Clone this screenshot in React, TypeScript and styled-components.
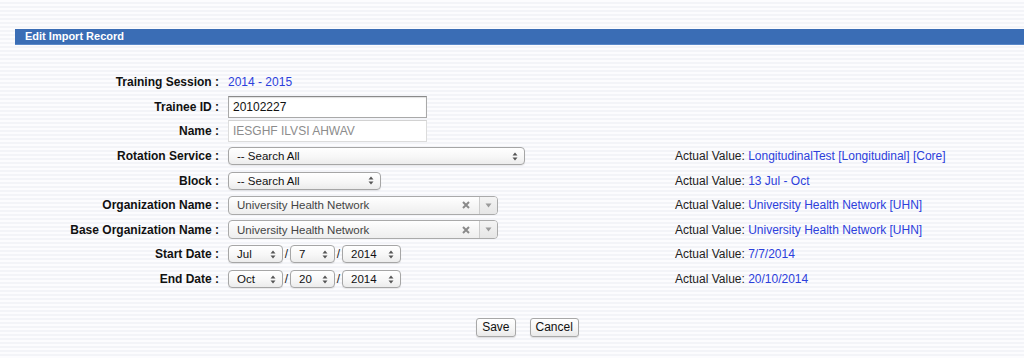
import React from 'react';
import styled, { createGlobalStyle } from 'styled-components';

const GlobalStyle = createGlobalStyle`
  html, body {
    margin: 0;
    padding: 0;
  }
  body {
    font-family: "Liberation Sans", Arial, sans-serif;
    font-size: 12px;
    color: #111;
    background: repeating-linear-gradient(
      to bottom,
      #fcfcfe 0px,
      #fcfcfe 2px,
      #f3f4f8 2px,
      #f3f4f8 4px
    );
    min-height: 358px;
  }
`;

const Page = styled.div`
  padding-top: 29px;
  height: 358px;
  box-sizing: border-box;
`;

const TitleBar = styled.div`
  margin-left: 15px;
  height: 15px;
  background: #3a6db5;
  border-bottom: 1px solid #5a88c8;
  color: #fff;
  font-weight: bold;
  font-size: 11px;
  line-height: 15px;
  padding-left: 10px;
`;

const Form = styled.div`
  margin-top: 25px;
  display: grid;
  grid-template-columns: 220px 455px 1fr;
  grid-auto-rows: 24.6px;
  align-items: center;
`;

const Label = styled.div`
  font-weight: bold;
  text-align: right;
  padding-right: 1px;
  white-space: nowrap;
`;

const Field = styled.div`
  padding-left: 8px;
  display: flex;
  align-items: center;
`;

const Blue = styled.span`
  color: #2c40dc;
`;

const Actual = styled.div`
  white-space: nowrap;
  color: #222;
`;

const TextBox = styled.div<{ $disabled?: boolean }>`
  width: 199px;
  height: 22px;
  box-sizing: border-box;
  background: #fff;
  border: 1px solid ${(p) => (p.$disabled ? '#dcdcdc' : '#a9a9a9')};
  border-top-color: ${(p) => (p.$disabled ? '#d2d2d2' : '#8a8a8a')};
  box-shadow: ${(p) => (p.$disabled ? 'none' : 'inset 0 1px 1px rgba(0,0,0,0.12)')};
  color: ${(p) => (p.$disabled ? '#8c8c8c' : '#111')};
  padding-left: 4px;
  line-height: 20px;
  font-size: 12px;
`;

const SelectBox = styled.div<{ $w: number }>`
  width: ${(p) => p.$w}px;
  height: 18px;
  box-sizing: border-box;
  border: 1px solid #a6a6a6;
  border-radius: 4px;
  background: linear-gradient(to bottom, #ffffff 0%, #f7f7f7 55%, #ececec 100%);
  box-shadow: 0 1px 1px rgba(0,0,0,0.08);
  display: flex;
  align-items: center;
  justify-content: space-between;
  padding: 0 6px 0 8px;
  font-size: 11.5px;
  color: #111;
`;

const Chosen = styled.div`
  width: 270px;
  height: 19px;
  box-sizing: border-box;
  border: 1px solid #aaa;
  border-radius: 4px;
  background: linear-gradient(to bottom, #ffffff 0%, #f6f6f6 50%, #eeeeee 100%);
  display: flex;
  align-items: center;
  font-size: 11.5px;
  color: #444;
`;

const ChosenText = styled.span`
  flex: 1;
  padding-left: 8px;
`;

const ChosenClear = styled.span`
  width: 16px;
  display: flex;
  justify-content: center;
  margin-right: 5px;
`;

const ChosenArrow = styled.span`
  width: 17px;
  height: 100%;
  border-left: 1px solid #ccc;
  background: linear-gradient(to bottom, #f4f4f4, #e6e6e6);
  border-radius: 0 3px 3px 0;
  display: flex;
  align-items: center;
  justify-content: center;
`;

const DateRow = styled.div`
  display: flex;
  align-items: center;
`;

const Slash = styled.span`
  width: 7px;
  text-align: center;
  color: #222;
`;

const ButtonRow = styled.div`
  margin-top: 27px;
  display: flex;
  justify-content: center;
  gap: 14px;
  padding-left: 31px;
`;

const Button = styled.button`
  font-family: "Liberation Sans", Arial, sans-serif;
  font-size: 12px;
  height: 19px;
  padding: 0 5px;
  border: 1px solid #a8a8a8;
  border-radius: 3px;
  background: linear-gradient(to bottom, #ffffff 0%, #f5f5f5 60%, #e9e9e9 100%);
  box-shadow: 0 1px 1px rgba(0,0,0,0.12);
  color: #111;
  line-height: 17px;
`;

const UpDown = () => (
  <svg width="6" height="9" viewBox="0 0 6 9">
    <path d="M3 0.5 L5.5 3.5 L0.5 3.5 Z" fill="#555" />
    <path d="M3 8.5 L5.5 5.5 L0.5 5.5 Z" fill="#555" />
  </svg>
);

const ClearX = () => (
  <svg width="8" height="8" viewBox="0 0 8 8">
    <path d="M1 1 L7 7 M7 1 L1 7" stroke="#8a8a8a" strokeWidth="2" />
  </svg>
);

const DownArrow = () => (
  <svg width="7" height="5" viewBox="0 0 7 5">
    <path d="M0.5 0.5 L6.5 0.5 L3.5 4.5 Z" fill="#9a9a9a" />
  </svg>
);

const Select = ({ value, width }: { value: string; width: number }) => (
  <SelectBox $w={width}>
    <span>{value}</span>
    <UpDown />
  </SelectBox>
);

const ChosenSelect = ({ value }: { value: string }) => (
  <Chosen>
    <ChosenText>{value}</ChosenText>
    <ChosenClear>
      <ClearX />
    </ChosenClear>
    <ChosenArrow>
      <DownArrow />
    </ChosenArrow>
  </Chosen>
);

const DatePicker = ({ m, d, y }: { m: string; d: string; y: string }) => (
  <DateRow>
    <Select value={m} width={55} />
    <Slash>/</Slash>
    <Select value={d} width={45} />
    <Slash>/</Slash>
    <Select value={y} width={59} />
  </DateRow>
);

const ActualValue = ({ value }: { value?: string }) =>
  value ? (
    <Actual>
      Actual Value: <Blue>{value}</Blue>
    </Actual>
  ) : (
    <div />
  );

function App() {
  return (
    <Page>
      <GlobalStyle />
      <TitleBar>Edit Import Record</TitleBar>
      <Form>
        <Label>Training Session :</Label>
        <Field>
          <Blue>2014 - 2015</Blue>
        </Field>
        <ActualValue />

        <Label>Trainee ID :</Label>
        <Field>
          <TextBox>20102227</TextBox>
        </Field>
        <ActualValue />

        <Label>Name :</Label>
        <Field>
          <TextBox $disabled>IESGHF ILVSI AHWAV</TextBox>
        </Field>
        <ActualValue />

        <Label>Rotation Service :</Label>
        <Field>
          <Select value="-- Search All" width={297} />
        </Field>
        <ActualValue value="LongitudinalTest [Longitudinal] [Core]" />

        <Label>Block :</Label>
        <Field>
          <Select value="-- Search All" width={153} />
        </Field>
        <ActualValue value="13 Jul - Oct" />

        <Label>Organization Name :</Label>
        <Field>
          <ChosenSelect value="University Health Network" />
        </Field>
        <ActualValue value="University Health Network [UHN]" />

        <Label>Base Organization Name :</Label>
        <Field>
          <ChosenSelect value="University Health Network" />
        </Field>
        <ActualValue value="University Health Network [UHN]" />

        <Label>Start Date :</Label>
        <Field>
          <DatePicker m="Jul" d="7" y="2014" />
        </Field>
        <ActualValue value="7/7/2014" />

        <Label>End Date :</Label>
        <Field>
          <DatePicker m="Oct" d="20" y="2014" />
        </Field>
        <ActualValue value="20/10/2014" />
      </Form>
      <ButtonRow>
        <Button>Save</Button>
        <Button>Cancel</Button>
      </ButtonRow>
    </Page>
  );
}

export default App;
